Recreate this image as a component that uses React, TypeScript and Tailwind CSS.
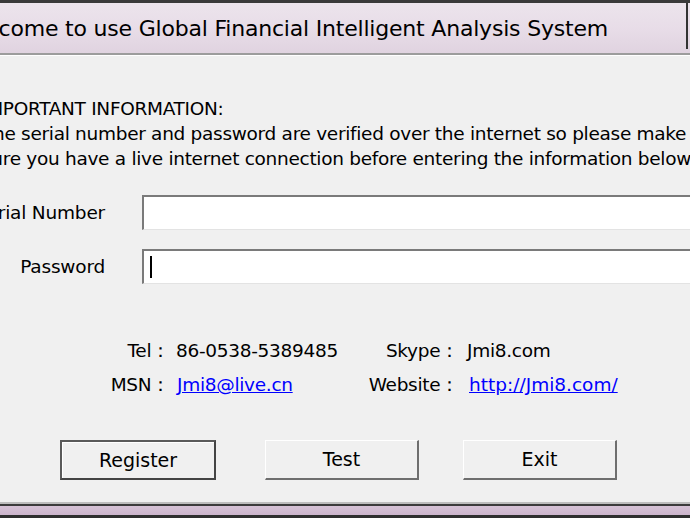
import React from 'react';

const font = "font-['DejaVu_Sans','Liberation_Sans',sans-serif]";

const Sunken: React.FC<{ caret?: boolean }> = ({ caret }) => (
  <div className="h-[35px] flex-1 border-t-2 border-l-2 border-t-[#7a7a7a] border-l-[#7a7a7a] border-b border-b-[#e3e3e3] bg-white relative">
    {caret && <div className="absolute left-[6px] top-[5px] w-[2px] h-[22px] bg-black" />}
  </div>
);

const Btn: React.FC<{ label: string; primary?: boolean }> = ({ label, primary }) => (
  <button
    className={
      primary
        ? 'w-[156px] h-[40px] border-2 border-[#5a5a5a] border-r-[#444] border-b-[#444] bg-[#f0f0f0] text-[19px] text-black shadow-[inset_1px_1px_0_#fff]'
        : 'w-[154px] h-[40px] border-t border-l border-t-white border-l-white border-r-2 border-b-2 border-r-[#6e6e6e] border-b-[#6e6e6e] bg-[#f0f0f0] text-[19px] text-black'
    }
  >
    {label}
  </button>
);

export default function App() {
  return (
    <div className={`w-[690px] h-[518px] overflow-hidden bg-[#f0f0f0] flex flex-col ${font} text-black`}>
      {/* title bar */}
      <div className="h-[3px] bg-[#3a3a3a]" />
      <div className="h-[50px] bg-gradient-to-b from-[#ece4ec] via-[#e8dde8] to-[#e0d3e0] flex items-center relative overflow-hidden">
        <span className="whitespace-nowrap text-[22px] tracking-[-0.2px] ml-[-41px] mt-[1px]">
          Welcome to use Global Financial Intelligent Analysis System
        </span>
        <div className="absolute right-[2px] top-0 bottom-[4px] w-[2px] bg-[#333]" />
      </div>
      <div className="h-[2px] bg-[#9c9c9c]" />
      <div className="h-[1px] bg-white" />

      {/* info text */}
      <div className="mt-[40px] ml-[-18px] text-[18.5px] leading-[25px] whitespace-nowrap tracking-[-0.3px]">
        <div>IMPORTANT INFORMATION:</div>
        <div>The serial number and password are verified over the internet so please make</div>
        <div>sure you have a live internet connection before entering the information below.</div>
      </div>

      {/* fields */}
      <div className="mt-[24px] flex flex-col gap-[19px]">
        <div className="flex items-center">
          <div className="w-[150px] ml-[-45px] flex justify-end text-[18.5px] tracking-[-0.2px] whitespace-nowrap">Serial Number</div>
          <div className="w-[37px]" />
          <Sunken />
        </div>
        <div className="flex items-center">
          <div className="w-[150px] ml-[-45px] flex justify-end text-[18.5px] tracking-[-0.2px] whitespace-nowrap">Password</div>
          <div className="w-[37px]" />
          <Sunken caret />
        </div>
      </div>

      {/* contacts */}
      <div className="mt-[55px] grid grid-cols-[170px_180px_109px_auto] gap-y-[10px] text-[18.5px] tracking-[-0.3px] leading-[24px] whitespace-nowrap">
        <div className="text-right">Tel：</div>
        <div className="pl-[6px]">86-0538-5389485</div>
        <div className="text-right">Skype：</div>
        <div className="pl-[8px]">Jmi8.com</div>
        <div className="text-right">MSN：</div>
        <div className="pl-[7px]"><a className="text-[#0000ff] underline" href="#">Jmi8@live.cn</a></div>
        <div className="text-right">Website：</div>
        <div className="pl-[10px] tracking-[0px]"><a className="text-[#0000ff] underline" href="#">http://Jmi8.com/</a></div>
      </div>

      {/* buttons */}
      <div className="mt-[43px] flex items-start pl-[60px]">
        <Btn label="Register" primary />
        <div className="w-[49px]" />
        <Btn label="Test" />
        <div className="w-[44px]" />
        <Btn label="Exit" />
      </div>

      <div className="flex-1" />
      {/* bottom frame */}
      <div className="h-[2px] bg-[#bdbdbd]" />
      <div className="h-[2px] bg-[#3c3c3c]" />
      <div className="h-[9px] bg-gradient-to-b from-[#d6c2d6] to-[#cbb4cb]" />
      <div className="h-[3px] bg-[#2e2e2e]" />
    </div>
  );
}
